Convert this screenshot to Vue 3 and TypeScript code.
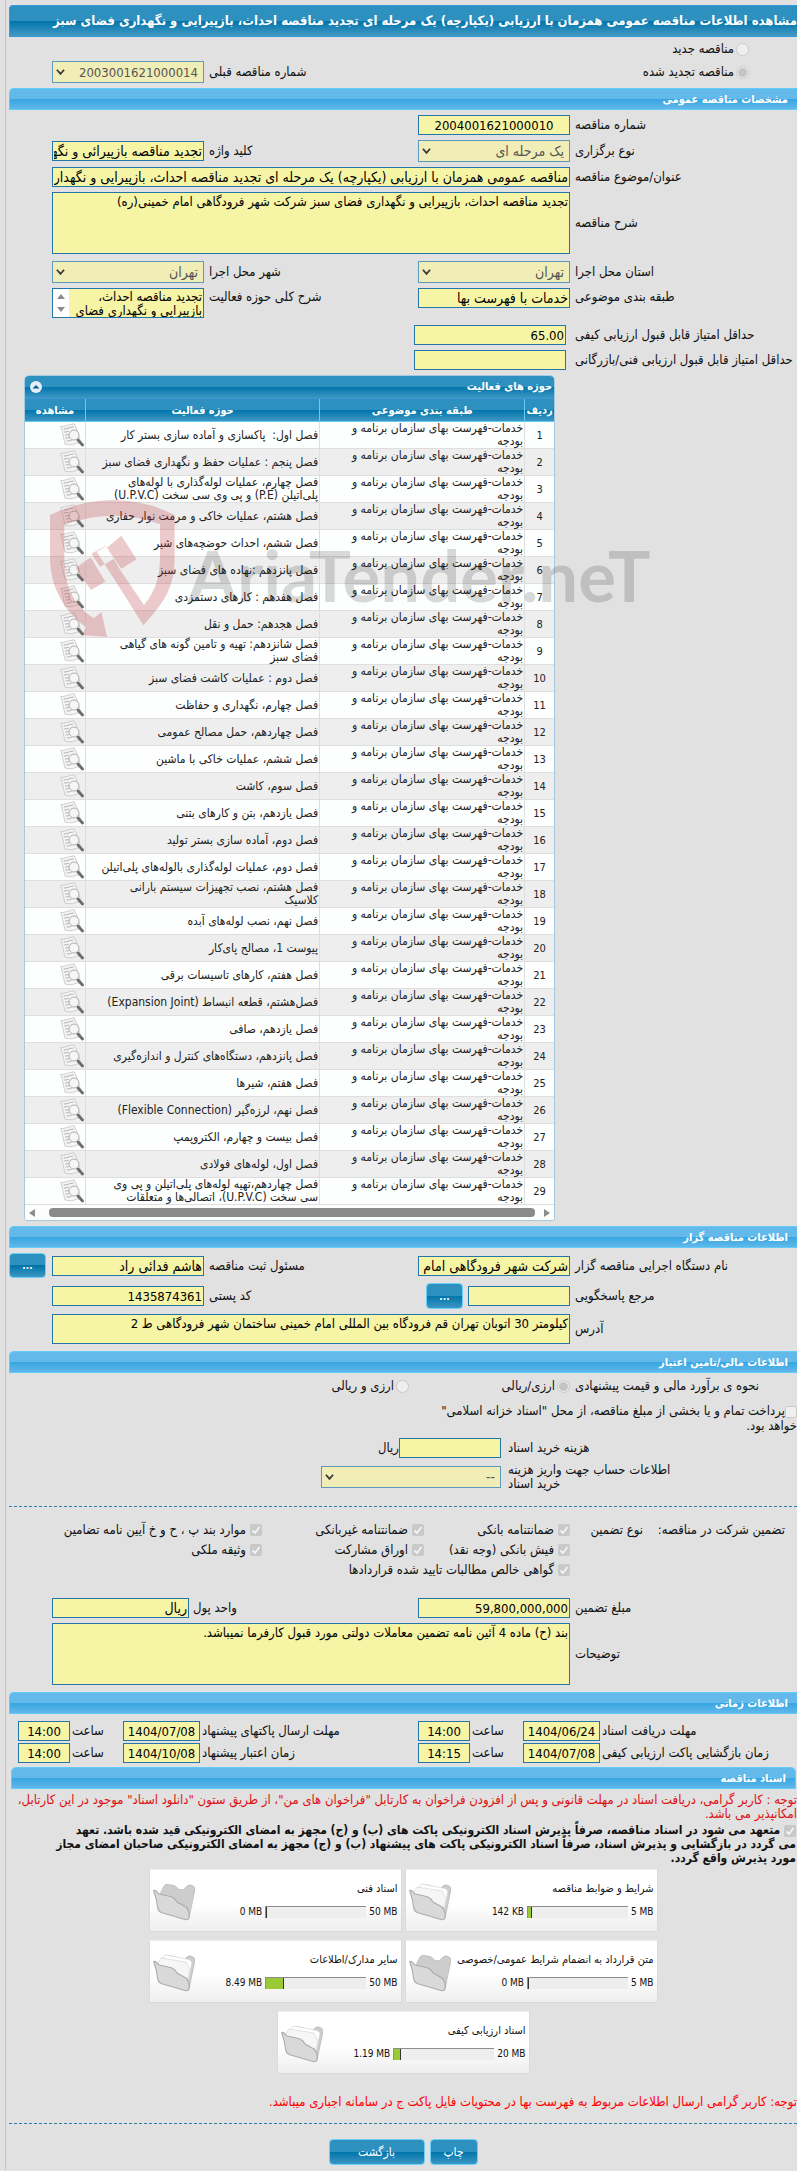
<script setup lang="ts">
interface Activity { n: number; title: string }
interface DocCard { title: string; max: string; used: string; percent: number; filled: boolean }
interface Guarantee { id: string; label: string }

const category = 'خدمات-فهرست بهای سازمان برنامه و\nبودجه'
const titles: string[] = [
  'فصل اول:  پاکسازی و آماده سازی بستر کار',
  'فصل پنجم : عملیات حفظ و نگهداری فضای سبز',
  'فصل چهارم، عملیات لوله‌گذاری با لوله‌های\nپلی‌اتیلن (P.E) و پی وی سی سخت (U.P.V.C)',
  'فصل هشتم، عملیات خاکی و مرمت نوار حفاری',
  'فصل ششم، احداث حوضچه‌های شیر',
  'فصل پانزدهم :نهاده های فضای سبز',
  'فصل هفدهم : کارهای دستمزدی',
  'فصل هجدهم: حمل و نقل',
  'فصل شانزدهم: تهیه و تامین گونه های گیاهی\nفضای سبز',
  'فصل دوم : عملیات کاشت فضای سبز',
  'فصل چهارم، نگهداری و حفاظت',
  'فصل چهاردهم، حمل مصالح عمومی',
  'فصل ششم، عملیات خاکی با ماشین',
  'فصل سوم، کاشت',
  'فصل یازدهم، بتن و کارهای بتنی',
  'فصل دوم، آماده سازی بستر تولید',
  'فصل دوم، عملیات لوله‌گذاری بالوله‌های پلی‌اتیلن',
  'فصل هشتم، نصب تجهیزات سیستم بارانی\nکلاسیک',
  'فصل نهم، نصب لوله‌های آبده',
  'پیوست 1، مصالح پای‌کار',
  'فصل هفتم، کارهای تاسیسات برقی',
  'فصل‌هشتم، قطعه انبساط (Expansion Joint)',
  'فصل یازدهم، صافی',
  'فصل پانزدهم، دستگاه‌های کنترل و اندازه‌گیری',
  'فصل هفتم، شیرها',
  'فصل نهم، لرزه‌گیر (Flexible Connection)',
  'فصل بیست و چهارم، الکتروپمپ',
  'فصل اول، لوله‌های فولادی',
  'فصل چهاردهم،تهیه لوله‌های پلی‌اتیلن و پی وی\nسی سخت (U.P.V.C)، اتصالی‌ها و متعلقات',
]
const activities: Activity[] = titles.map((title, i) => ({ n: i + 1, title }))

const guarantees: Guarantee[] = [
  { id: 'g1', label: 'ضمانتنامه بانکی' },
  { id: 'g2', label: 'ضمانتنامه غیربانکی' },
  { id: 'g3', label: 'موارد بند پ ، ح و خ آیین نامه تضامین' },
  { id: 'g4', label: 'فیش بانکی (وجه نقد)' },
  { id: 'g5', label: 'اوراق مشارکت' },
  { id: 'g6', label: 'وثیقه ملکی' },
  { id: 'g7', label: 'گواهی خالص مطالبات تایید شده قراردادها' },
]

const cards: DocCard[] = [
  { title: 'شرایط و ضوابط مناقصه', max: '5 MB', used: '142 KB', percent: 3, filled: true },
  { title: 'اسناد فنی', max: '50 MB', used: '0 MB', percent: 0, filled: false },
  { title: 'متن قرارداد به انضمام شرایط عمومی/خصوصی', max: '5 MB', used: '0 MB', percent: 0, filled: false },
  { title: 'سایر مدارک/اطلاعات', max: '50 MB', used: '8.49 MB', percent: 17, filled: true },
  { title: 'اسناد ارزیابی کیفی', max: '20 MB', used: '1.19 MB', percent: 6, filled: true },
]
</script>

<template>
  <main class="page" dir="rtl">
    <h1 class="title-bar">مشاهده اطلاعات مناقصه عمومی همزمان با ارزیابی (یکپارچه) یک مرحله ای تجدید مناقصه احداث، بازپیرایی و نگهداری فضای سبز</h1>

    <div class="kind first">
      <input id="kind-new" type="radio" name="kind" disabled><label for="kind-new">مناقصه جدید</label>
    </div>
    <div class="form-row">
      <div class="kind">
        <input id="kind-renew" type="radio" name="kind" checked disabled><label for="kind-renew">مناقصه تجدید شده</label>
      </div>
      <span></span>
      <label class="lbl" for="prev">شماره مناقصه قبلی</label>
      <span class="select">
        <select id="prev" class="num" disabled><option>2003001621000014</option></select>
        <svg viewBox="0 0 10 8"><path d="M1 1.5 5 6 9 1.5" /></svg>
      </span>
    </div>

    <h2 class="section">مشخصات مناقصه عمومی</h2>
    <div class="rows">
      <div class="form-row">
        <label class="lbl" for="num">شماره مناقصه</label>
        <input id="num" class="num mid" value="2004001621000010" readonly>
      </div>
      <div class="form-row">
        <label class="lbl" for="type">نوع برگزاری</label>
        <span class="select">
          <select id="type" disabled><option>یک مرحله ای</option></select>
          <svg viewBox="0 0 10 8"><path d="M1 1.5 5 6 9 1.5" /></svg>
        </span>
        <label class="lbl" for="kw">کلید واژه</label>
        <input id="kw" value="تجدید مناقصه بازپیرائی و نگهداری فضای سبز" readonly>
      </div>
      <div class="form-row">
        <label class="lbl" for="subject">عنوان/موضوع مناقصه</label>
        <input id="subject" class="wide" value="مناقصه عمومی همزمان با ارزیابی (یکپارچه) یک مرحله ای تجدید مناقصه احداث، بازپیرایی و نگهداری فضای سبز" readonly>
      </div>
      <div class="form-row after-area">
        <label class="lbl" for="desc">شرح مناقصه</label>
        <textarea id="desc" class="wide tall" readonly>تجدید مناقصه احداث، بازپیرایی و نگهداری فضای سبز شرکت شهر فرودگاهی امام خمینی(ره)</textarea>
      </div>
      <div class="form-row">
        <label class="lbl" for="prov">استان محل اجرا</label>
        <span class="select">
          <select id="prov" disabled><option>تهران</option></select>
          <svg viewBox="0 0 10 8"><path d="M1 1.5 5 6 9 1.5" /></svg>
        </span>
        <label class="lbl" for="city">شهر محل اجرا</label>
        <span class="select">
          <select id="city" disabled><option>تهران</option></select>
          <svg viewBox="0 0 10 8"><path d="M1 1.5 5 6 9 1.5" /></svg>
        </span>
      </div>
      <div class="form-row top after-area">
        <label class="lbl" for="cat">طبقه بندی موضوعی</label>
        <input id="cat" value="خدمات با فهرست بها" readonly>
        <label class="lbl" for="scope">شرح کلی حوزه فعالیت</label>
        <div class="scroll-area">
          <textarea id="scope" readonly>تجدید مناقصه احداث، بازپیرایی و نگهداری فضای سبز</textarea>
          <div class="vbar"><i class="up"></i><i class="down"></i></div>
        </div>
      </div>
      <div class="form-row score">
        <label class="lbl" for="q1">حداقل امتیاز قابل قبول ارزیابی کیفی</label>
        <input id="q1" class="num" value="65.00" readonly>
      </div>
      <div class="form-row score">
        <label class="lbl" for="q2">حداقل امتیاز قابل قبول ارزیابی فنی/بازرگانی</label>
        <input id="q2" value="" readonly>
      </div>
    </div>

    <div class="panel-wrap">
      <section class="panel">
        <header class="panel-head">
          <h3>حوزه های فعالیت</h3>
          <button class="fold" aria-label="بستن"><svg viewBox="0 0 12 12"><circle cx="6" cy="6" r="6" fill="#e3edf8" /><path d="M2.5 7.5 6 4l3.500 3.500z" fill="#0b5f90" /></svg></button>
        </header>
        <table>
          <colgroup><col class="c1"><col class="c2"><col class="c3"><col class="c4"></colgroup>
          <thead>
            <tr><th>ردیف</th><th>طبقه بندی موضوعی</th><th>حوزه فعالیت</th><th>مشاهده</th></tr>
          </thead>
          <tbody>
            <tr v-for="a in activities" :key="a.n">
              <td class="n">{{ a.n }}</td>
              <td class="text">{{ category }}</td>
              <td class="text">{{ a.title }}</td>
              <td>
                <button class="view" aria-label="مشاهده">
                  <svg viewBox="0 0 24 24">
                    <path d="M.8 3.500Q4 3.500 7 2.500T14 .8L17 7l4 13q-5-.5-7 1T5 21Q4 17 3 12T.8 3.500Z" fill="#f5f5f5" stroke="#bdbdbd" stroke-width=".7" />
                    <path d="M3.500 6q3 0 5-.900T13.500 4M4 9q3 0 5-.9M5 12q2.500 0 4-.5M5.500 15q2.500 0 4-.5M6.500 18q3 0 5-.6" fill="none" stroke="#a9a9a9" stroke-width=".9" />
                    <path d="m18 17 4.500 5" stroke="#6c6c6c" stroke-width="2.800" stroke-linecap="round" />
                    <circle cx="14" cy="12" r="5" fill="#f6f6f6" fill-opacity=".85" stroke="#b0b0b0" stroke-width="1" />
                  </svg>
                </button>
              </td>
            </tr>
          </tbody>
        </table>
        <div class="hbar"><i class="right"></i><b></b><i class="left"></i></div>
      </section>
      <svg class="mark" viewBox="120 384 1800 420" aria-hidden="true">
        <path fill="#bd3038" fill-opacity=".25" fill-rule="evenodd" d="M120 435Q215 390 310 390T494 435V560C494 655 460 700 400 766L330 655 260 545 289 528 332 602 402 705C438 660 450 620 450 560V462Q380 437 310 437T163 464V560C163 650 190 705 252 745L274 726 291 801 216 795 228 772C160 720 120 650 120 560ZM197 594 242 562 286 635 243 660ZM244 551 288 527 311 567 270 590ZM291 533 334 497 380 568 334 596Z" />
        <text x="534" y="697">AriaTender.neT</text>
      </svg>
    </div>

    <h2 class="section">اطلاعات مناقصه گزار</h2>
    <div class="rows">
      <div class="form-row">
        <label class="lbl" for="org">نام دستگاه اجرایی مناقصه گزار</label>
        <input id="org" value="شرکت شهر فرودگاهی امام خمینی" readonly>
        <label class="lbl" for="reg">مسئول ثبت مناقصه</label>
        <input id="reg" value="هاشم فدائی راد" readonly>
        <button class="btn dots end">...</button>
      </div>
      <div class="form-row">
        <label class="lbl" for="resp">مرجع پاسخگویی</label>
        <div class="with-btn"><input id="resp" value="" readonly><button class="btn dots">...</button></div>
        <label class="lbl" for="zip">کد پستی</label>
        <input id="zip" class="num" value="1435874361" readonly>
      </div>
      <div class="form-row after-area">
        <label class="lbl" for="addr">آدرس</label>
        <textarea id="addr" class="wide short" readonly>کیلومتر 30 اتوبان تهران قم فرودگاه بین المللی امام خمینی ساختمان شهر فرودگاهی ط 2</textarea>
      </div>
    </div>

    <h2 class="section">اطلاعات مالی/تامین اعتبار</h2>
    <div class="currency">
      <span class="lbl">نحوه ی برآورد مالی و قیمت پیشنهادی</span>
      <span class="opt"><input id="cur1" type="radio" name="cur" checked disabled><label for="cur1">ارزی/ریالی</label></span>
      <span class="opt"><input id="cur2" type="radio" name="cur" disabled><label for="cur2">ارزی و ریالی</label></span>
    </div>
    <div class="treasury">
      <input id="tr" type="checkbox" disabled><label for="tr">پرداخت تمام و یا بخشی از مبلغ مناقصه، از محل "اسناد خزانه اسلامی"<br>خواهد بود.</label>
    </div>
    <div class="cost">
      <label for="cost">هزینه خرید اسناد</label>
      <div class="cost-field"><input id="cost" value="" readonly><span>ریال</span></div>
      <label for="acc">اطلاعات حساب جهت واریز هزینه<br>خرید اسناد</label>
      <span class="select">
        <select id="acc" disabled><option>--</option></select>
        <svg viewBox="0 0 10 8"><path d="M1 1.5 5 6 9 1.5" /></svg>
      </span>
    </div>
    <hr>
    <div class="guarantee">
      <span class="g-title">تضمین شرکت در مناقصه:</span>
      <span class="g-kind">نوع تضمین</span>
      <div class="g-list">
        <span v-for="g in guarantees" :key="g.id" class="check">
          <input :id="g.id" type="checkbox" checked disabled><label :for="g.id">{{ g.label }}</label>
        </span>
      </div>
    </div>
    <div class="rows amount">
      <div class="form-row">
        <label class="lbl" for="amt">مبلغ تضمین</label>
        <input id="amt" class="num" value="59,800,000,000" readonly>
        <div class="unit"><label for="unit">واحد پول</label><input id="unit" value="ریال" readonly></div>
      </div>
      <div class="form-row after-area">
        <label class="lbl" for="notes">توضیحات</label>
        <textarea id="notes" class="wide tall" readonly>بند (ح) ماده 4 آئین نامه تضمین معاملات دولتی مورد قبول کارفرما نمیباشد.</textarea>
      </div>
    </div>

    <h2 class="section">اطلاعات زمانی</h2>
    <div class="dates">
      <label class="lbl" for="d1">مهلت دریافت اسناد</label><input id="d1" class="num mid" value="1404/06/24" readonly>
      <label class="lbl" for="t1">ساعت</label><input id="t1" class="num mid" value="14:00" readonly>
      <label class="lbl" for="d2">مهلت ارسال پاکتهای پیشنهاد</label><input id="d2" class="num mid" value="1404/07/08" readonly>
      <label class="lbl" for="t2">ساعت</label><input id="t2" class="num mid" value="14:00" readonly>
      <label class="lbl second" for="d3">زمان بازگشایی پاکت ارزیابی کیفی</label><input id="d3" class="num mid" value="1404/07/08" readonly>
      <label class="lbl" for="t3">ساعت</label><input id="t3" class="num mid" value="14:15" readonly>
      <label class="lbl" for="d4">زمان اعتبار پیشنهاد</label><input id="d4" class="num mid" value="1404/10/08" readonly>
      <label class="lbl" for="t4">ساعت</label><input id="t4" class="num mid" value="14:00" readonly>
    </div>

    <h2 class="section inset">اسناد مناقصه</h2>
    <p class="warn">توجه : کاربر گرامی، دریافت اسناد در مهلت قانونی و پس از افزودن فراخوان به کارتابل "فراخوان های من"، از طریق ستون "دانلود اسناد" موجود در این کارتابل،<br>امکانپذیر می باشد.</p>
    <div class="commit">
      <input id="commit" type="checkbox" checked disabled> <label for="commit">متعهد می شود در اسناد مناقصه، صرفاً پذیرش اسناد الکترونیکی پاکت های (ب) و (ج) مجهز به امضای الکترونیکی قید شده باشد. تعهد<br>می گردد در بازگشایی و پذیرش اسناد، صرفاً اسناد الکترونیکی پاکت های پیشنهاد (ب) و (ج) مجهز به امضای الکترونیکی صاحبان امضای مجاز<br>مورد پذیرش واقع گردد.</label>
    </div>

    <div class="cards">
      <article v-for="c in cards" :key="c.title" class="card">
        <div class="card-body">
          <h4>{{ c.title }}</h4>
          <div class="meter">
            <span dir="ltr">{{ c.max }}</span>
            <div class="track"><div class="fill" :style="{ width: c.percent + '%' }"></div></div>
            <span dir="ltr">{{ c.used }}</span>
          </div>
        </div>
        <svg class="folder" viewBox="0 0 42 38">
          <path d="M6 13 11 3Q12 1 15 1.500L21 2.500Q24 3.500 25 6L30 7 34 3Q37 .5 41 3.500 42.500 6 41 11L36 35 9 26Z" fill="#cdcdcd" stroke="#bababa" stroke-width=".8" />
          <g v-if="c.filled" stroke="#d2d2d2" stroke-width=".6">
            <path d="M7 10 12 .8 36 5.500 39 8 35 29 10 20Z" fill="#fff" />
            <path d="M4 10 8 4 33 8 37 16 34 29 10 20Z" fill="#f6f6f6" />
          </g>
          <path d="M1 8.500Q0 7 2.500 7.500L6 11Q14 12.500 19 14 22 15.500 24 19L33 24Q37 28 36 35 35 37.500 32 36.500L8 29.500Q5 28 4.500 24Q4 17 1 8.500Z" fill="#d9d9d9" stroke="#acacac" stroke-width="1.100" />
        </svg>
      </article>
    </div>

    <p class="note">توجه: کاربر گرامی ارسال اطلاعات مربوط به فهرست بها در محتویات فایل پاکت ج در سامانه اجباری میباشد.</p>
    <hr class="last">
    <footer class="actions">
      <button class="btn print">چاپ</button>
      <button class="btn back">بازگشت</button>
    </footer>
  </main>
</template>

<style>
body { margin: 0; background: #e1e1e1; }
</style>

<style scoped>
* { box-sizing: border-box; }
.page, input, select, textarea, button { font-family: "DejaVu Sans Condensed", "DejaVu Sans", sans-serif; }
.page {
  margin-left: 5px;
  padding: 5px 0 5px 3px;
  border-left: 1px solid #c6c6c6;
  background: #e1e1e1;
  color: #111;
  font-size: 13px;
  line-height: 14px;
  overflow: hidden;
}
h1, h2, h3, h4, p { margin: 0; }
.title-bar {
  height: 32px;
  padding-top: 1px;
  border: 1px solid #3798dc;
  border-right: 0;
  border-radius: 4px 0 0 0;
  background: linear-gradient(#2e90bf 0 50%, #0074aa 50%, #4499c4);
  color: #fff;
  font-size: 13px;
  line-height: 28px;
  white-space: nowrap;
}
.section {
  height: 22px;
  padding-right: 9px;
  border: 1px solid #62cbf8;
  border-right: 0;
  border-radius: 5px 0 0 0;
  background: linear-gradient(#63b9e9 0 50%, #36a5e2 50%, #60b8e9);
  color: #fff;
  font-size: 11px;
  line-height: 21px;
}
.section.inset { margin: 4px 1px 0 2px; border-right: 1px solid #62cbf8; border-radius: 5px 5px 0 0; }
.rows { display: flex; flex-direction: column; gap: 5px; padding: 5px 0; }
.form-row {
  display: grid;
  grid-template-columns: minmax(0, 227fr) minmax(0, 152fr) minmax(0, 214fr) minmax(0, 152fr) minmax(0, 43fr);
  align-items: center;
}
.form-row.top { align-items: start; }
.form-row.top .lbl { margin-top: 2px; }
.form-row.score { grid-template-columns: minmax(0, 231fr) minmax(0, 152fr) minmax(0, 405fr); }
.form-row.score .lbl { padding-left: 9px; }
.after-area { margin-bottom: 2px; }
.lbl { padding-left: 5px; text-align: left; white-space: nowrap; }
input:not([type]), textarea, select {
  display: block;
  width: 100%;
  min-width: 0;
  height: 20px;
  margin: 0;
  padding: 0 1px;
  border: 1px solid #2576a8;
  border-radius: 0;
  background: #f6f4a5;
  color: #000;
  font-size: 14px;
  outline: 0;
}
input.num:not([type]), select.num { font-size: 13px; }
.mid { text-align: center; }
textarea { resize: none; font-size: 13px; line-height: 14px; padding-top: 2px; overflow: hidden; }
.wide { grid-column: 2 / 5; }
.tall { height: 62px; }
.short { height: 30px; }
.select { position: relative; display: block; }
select { height: 22px; padding: 0 5px; appearance: none; background: #f0edb6; border-color: #5c98ba; color: #555; opacity: 1; }
.select svg { position: absolute; left: 4px; top: 7px; width: 9px; height: 8px; fill: none; stroke: #3a3a3a; stroke-width: 2; }
.kind { display: flex; align-items: center; gap: 2px; padding-right: 48px; }
.kind.first { height: 24px; }
.kind + .form-row { margin-bottom: 5px; }
[type=radio] { appearance: none; flex: none; width: 13px; height: 13px; margin: 0; border: 1px solid #c9c9c9; border-radius: 50%; background: #efefef; }
[type=radio]:checked { background: radial-gradient(#c4c4c4 0 4px, #ededed 5px); }
[type=checkbox] { appearance: none; flex: none; width: 12px; height: 12px; margin: 0; border: 1px solid #c9c9c9; border-radius: 2px; background: #f0f0f0; }
[type=checkbox]:checked {
  background: #c9c9c9 url("data:image/svg+xml,%3Csvg xmlns='http://www.w3.org/2000/svg' viewBox='0 0 10 10'%3E%3Cpath d='M1.500 5.500 4 8 8.500 2' fill='none' stroke='%23f4f4f4' stroke-width='1.800'/%3E%3C/svg%3E") center / 10px 10px no-repeat;
}
.scroll-area { display: flex; height: 30px; border: 1px solid #2576a8; background: #f6f4a5; }
.scroll-area textarea { flex: 1; height: 28px; border: 0; padding-top: 1px; }
.vbar { display: flex; flex: none; flex-direction: column; justify-content: space-between; align-items: center; width: 16px; padding: 5px 0; background: #fff; }
.vbar i { border: 4px solid transparent; }
.vbar .up { border-top: 0; border-bottom: 5px solid #8b8b8b; }
.vbar .down { border-bottom: 0; border-top: 5px solid #8b8b8b; }

.panel-wrap { position: relative; margin-bottom: 5px; }
.panel { width: 67.4%; margin-right: auto; margin-left: 15px; border: 1px solid #a5c9e2; border-radius: 5px 5px 3px 3px; background: #fcfcfc; overflow: hidden; }
.panel-head { display: flex; justify-content: space-between; align-items: center; height: 23px; padding: 0 2px 0 5px; background: linear-gradient(#2e90bf 0 50%, #0074aa 50%, #3d97c4); border-bottom: 1px solid #3f95d8; color: #fff; }
.panel-head h3 { font-size: 11px; }
.fold { width: 12px; height: 12px; padding: 0; border: 0; background: none; }
.fold svg, .view svg { display: block; width: 100%; height: 100%; }
table { width: 100%; table-layout: fixed; border-collapse: separate; border-spacing: 0; color: #222; font-size: 12px; line-height: 13px; }
.c1 { width: 30px; }
.c2 { width: 205px; }
.c4 { width: 60px; }
th { height: 23px; padding: 0; border-bottom: 1px solid #62cbf8; border-left: 1px solid #62cbf8; background: linear-gradient(#2e90bf 0 50%, #0074aa 50%, #3d97c4); color: #fff; font-size: 11px; }
td { height: 27px; padding: 0 1px; border-bottom: 1px solid #dedede; border-left: 1px solid #dedede; vertical-align: middle; }
th:last-child, td:last-child { border-left: 0; }
tbody tr:nth-child(odd) { background: #fdfefe; }
tbody tr:nth-child(even) { background: #eee; }
.n { text-align: center; font-size: 11px; }
.text { white-space: pre; }
.view { display: block; width: 24px; height: 24px; margin: 0; padding: 0; border: 0; background: none; }
.hbar { display: flex; align-items: center; justify-content: space-between; height: 15px; padding: 0 4px; background: #fdfdfd; }
.hbar b { flex: 1; height: 9px; margin: 0 9px 0 14px; border-radius: 4px; background: #8b8b8b; }
.hbar i { border: 4px solid transparent; }
.hbar .right { border-right: 0; border-left: 6px solid #8b8b8b; }
.hbar .left { border-left: 0; border-right: 6px solid #8b8b8b; }
.mark { position: absolute; left: 41px; top: 123px; width: 600px; height: 140px; overflow: visible; pointer-events: none; direction: ltr; }
.mark text { font: bold 212px Lato, "Liberation Sans", sans-serif; fill: #000; fill-opacity: .15; }

.btn { border: 1px solid #6bd0f8; border-radius: 4px; background: linear-gradient(#2e90bf 0 50%, #0074aa 50%, #3d97c4); color: #fff; padding: 0; font-size: 12px; }
.dots { flex: none; width: 37px; height: 26px; font-size: 10px; font-weight: bold; }
.end { justify-self: end; height: 25px; }
.with-btn { display: flex; align-items: center; gap: 5px; }
.with-btn input { width: 102px; }
.currency { display: grid; grid-template-columns: minmax(0, 227fr) minmax(0, 161fr) minmax(0, 400fr); align-items: center; height: 26px; }
.opt { display: flex; align-items: center; gap: 2px; }
.treasury { margin-top: 4px; line-height: 15px; white-space: nowrap; }
.treasury input { vertical-align: middle; }
.cost { display: grid; grid-template-columns: minmax(0, 289fr) minmax(0, 180fr) minmax(0, 305fr); column-gap: 7px; row-gap: 5px; align-items: center; margin-top: 5px; }
.cost > label { grid-column: 1; justify-self: end; white-space: nowrap; }
.cost > label:last-of-type { text-align: left; }
.cost-field { display: flex; align-items: center; }
.cost-field input { flex: none; width: 102px; }
hr { height: 0; margin: 15px 0 0; border: 0; border-top: 1px dashed #2d7fb0; }
.guarantee { display: grid; grid-template-columns: minmax(0, 152fr) minmax(0, 75fr) minmax(0, 561fr); margin-top: 13px; line-height: 20px; }
.g-title { padding-right: 12px; white-space: nowrap; }
.g-kind { padding-right: 2px; white-space: nowrap; }
.g-list { display: grid; grid-template-columns: minmax(0, 146fr) minmax(0, 162fr) minmax(0, 253fr); }
.check { display: flex; gap: 4px; align-items: center; white-space: nowrap; }
.amount { padding-top: 18px; }
.unit { grid-column: 3 / 5; display: flex; align-items: center; justify-content: flex-end; gap: 4px; }
.unit input { flex: none; width: 137px; }
.dates {
  display: grid;
  grid-template-columns: minmax(0, 197fr) minmax(0, 77fr) minmax(0, 53fr) minmax(0, 52fr) minmax(0, 218fr) minmax(0, 77fr) minmax(0, 53fr) minmax(0, 52fr) minmax(0, 9fr);
  row-gap: 2px;
  align-items: center;
  padding-top: 7px;
}
.dates .lbl { padding-left: 2px; }
.dates .second { grid-column: 1; }
.warn { margin-top: 4px; color: #e01010; white-space: nowrap; }
.commit { padding-right: 1px; margin-top: 2px; font-size: 12px; font-weight: bold; white-space: nowrap; }
.commit input { vertical-align: middle; }
.cards { display: flex; flex-wrap: wrap; justify-content: center; gap: 8px 3px; width: 520px; max-width: 100%; margin: 4px auto 0; }
.card { display: flex; justify-content: space-between; width: 253px; height: 63px; padding: 13px 3px 0; border: 1px solid #dadada; border-top-color: #eee; background: linear-gradient(#fff 0 55%, #eee); font-size: 10px; }
.card-body { flex: 1; min-width: 0; }
.card h4 { font-size: 11px; font-weight: normal; line-height: 12px; white-space: nowrap; }
.meter { display: flex; align-items: center; gap: 3px; margin-top: 11px; line-height: 12px; white-space: nowrap; }
.track { flex: none; display: flex; justify-content: flex-end; width: 101px; height: 12px; border-top: 1px solid #8d8d8d; border-left: 1px solid #8d8d8d; background: #eee; }
.fill { box-sizing: content-box; border-right: 1px solid #333; background: #9acb34; }
.folder { flex: none; width: 42px; height: 38px; }
.note { margin-top: 21px; color: #f00; white-space: nowrap; }
.last { margin-top: 14px; }
.actions { display: flex; justify-content: center; gap: 5px; margin-top: 15px; }
.actions .btn { height: 26px; }
.print { width: 48px; }
.back { width: 96px; }
</style>
